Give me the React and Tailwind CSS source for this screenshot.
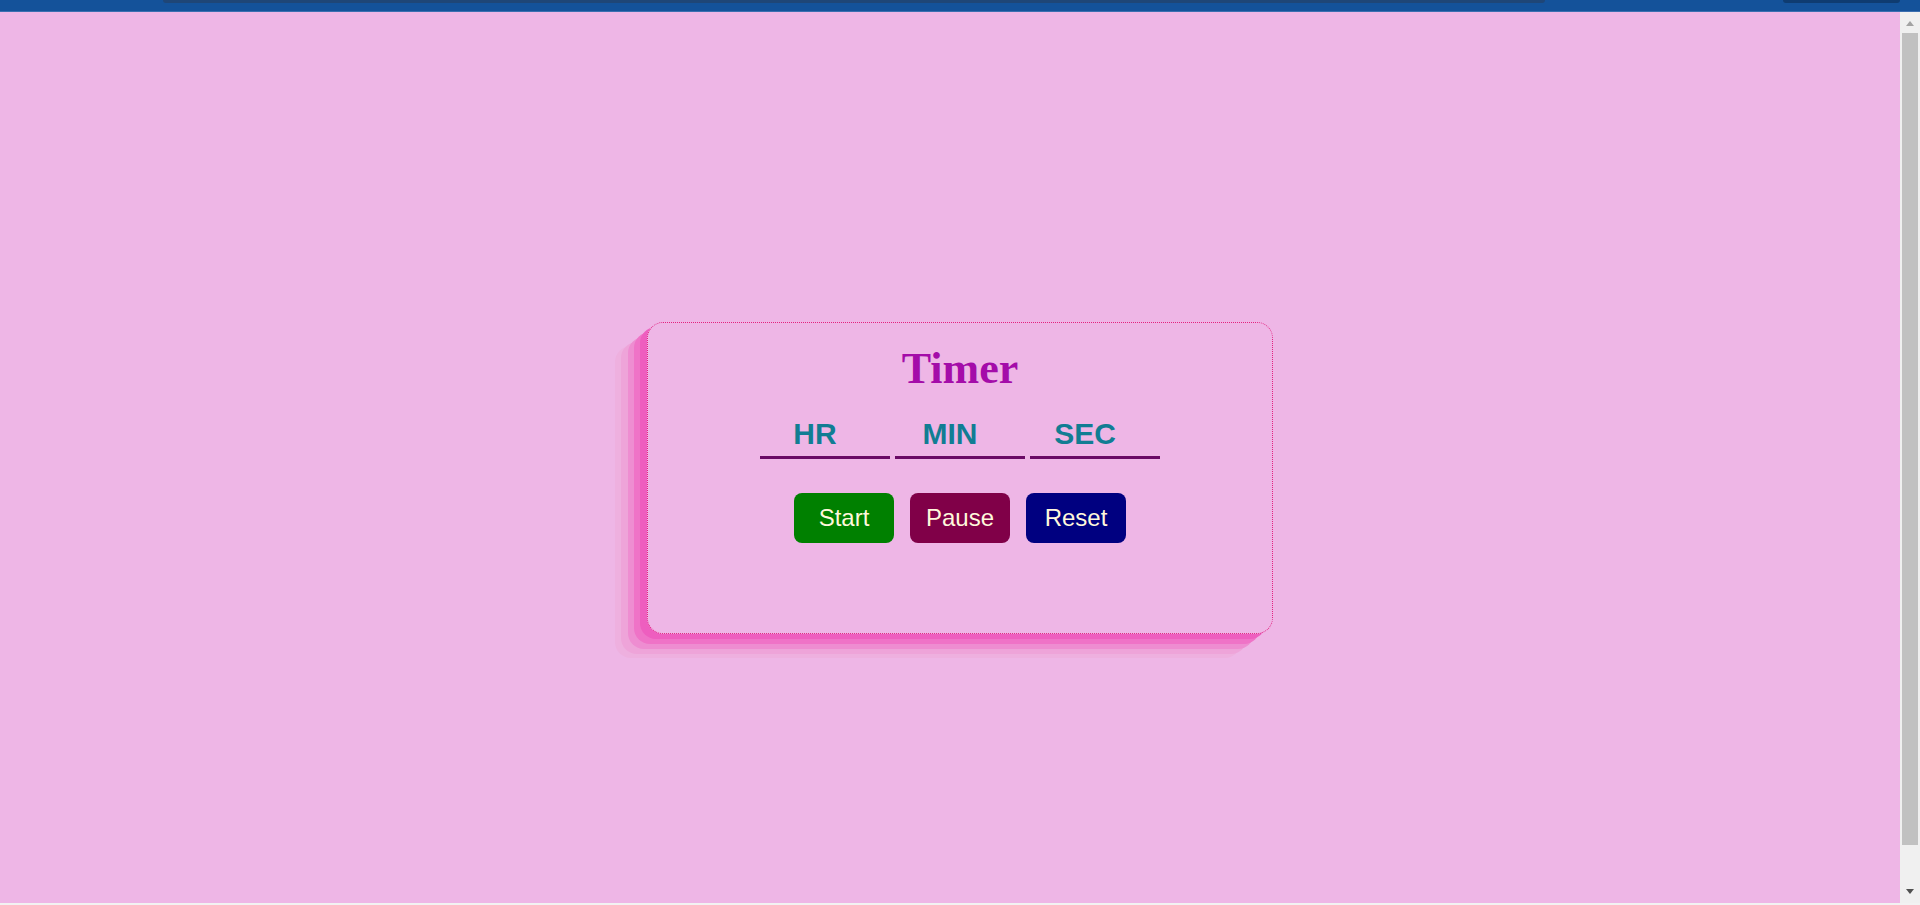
import React from "react";

export default function App() {
  return (
    <div className="h-[905px] w-[1920px] flex flex-col overflow-hidden bg-[#eeb6e6]">
      {/* browser chrome strip */}
      <div className="h-[12px] bg-[#14529a] border-b border-[#3b6fb0] flex items-start">
        <div className="w-[163px]" />
        <div className="w-[1382px] h-[3px] bg-[#1f4677] rounded-b-[4px]" />
        <div className="w-[238px]" />
        <div className="w-[117px] h-[3px] bg-[#0f3c71] rounded-b-[4px]" />
      </div>
      <div className="flex flex-1">
        <main className="flex-1 flex justify-center items-start pl-[20px] pt-[310px]">
          <div className="w-[626px] h-[312px] rounded-[16px] border border-dotted border-[#e3227f] bg-[#eeb6e6] flex flex-col items-center shadow-[-7px_5px_0_#ee5ebf,-13px_10px_0_#ef73c7,-19px_15px_0_#ee8dd1,-26px_20px_0_#eea4d9,-32px_24px_0_#eeb0df]">
            <h1 className="mt-[13px] font-['Liberation_Serif',serif] font-bold text-[44px] leading-normal text-[#a40ca9]">
              Timer
            </h1>
            <div className="mt-[14px] flex gap-[5px]">
              {["HR", "MIN", "SEC"].map((p) => (
                <input
                  key={p}
                  placeholder={p}
                  className="w-[130px] h-[43px] pb-[5px] pr-[20px] bg-transparent border-b-[3px] border-[#6a0a66] text-center font-['Liberation_Sans',sans-serif] font-bold text-[30px] leading-normal text-[#117d93] placeholder:text-[#117d93] outline-none"
                />
              ))}
            </div>
            <div className="mt-[34px] flex gap-[16px] font-['Liberation_Sans',sans-serif] text-[24px] text-[#fff8dc]">
              <button className="w-[100px] h-[50px] rounded-[8px] bg-[#008000]">Start</button>
              <button className="w-[100px] h-[50px] rounded-[8px] bg-[#800048]">Pause</button>
              <button className="w-[100px] h-[50px] rounded-[8px] bg-[#000080]">Reset</button>
            </div>
          </div>
        </main>
        {/* scrollbar */}
        <div className="w-[20px] bg-[#f0f0f0] flex flex-col items-center pt-[9px]">
          <div className="w-0 h-0 border-l-[4px] border-r-[4px] border-b-[5px] border-l-transparent border-r-transparent border-b-[#a3a3a3]" />
          <div className="mt-[7px] w-[16px] h-[812px] bg-[#c1c1c1]" />
          <div className="mt-[44px] w-0 h-0 border-l-[4px] border-r-[4px] border-t-[5px] border-l-transparent border-r-transparent border-t-[#505050]" />
        </div>
      </div>
      <div className="h-[2px] bg-[#f2f2f2]" />
    </div>
  );
}
